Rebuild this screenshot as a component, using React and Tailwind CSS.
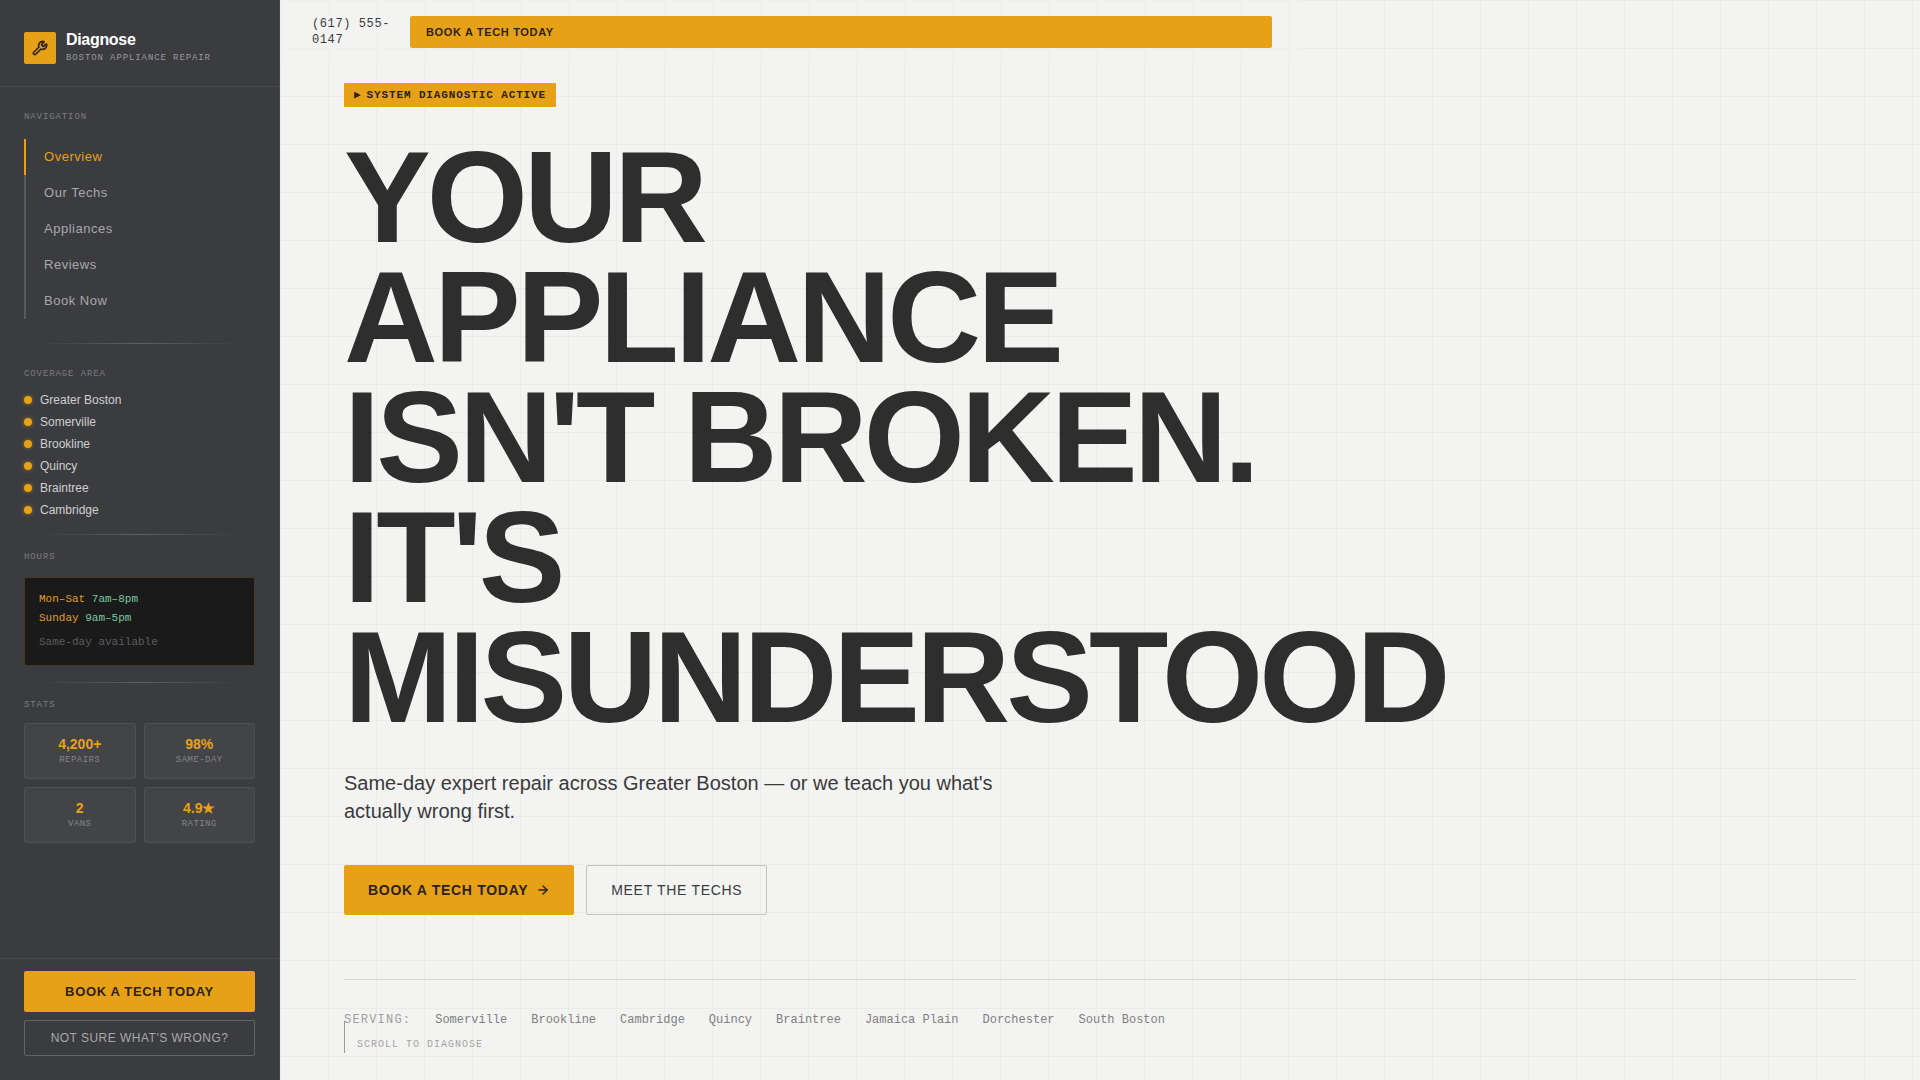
import React from 'react';
import { ArrowRight, Wrench } from 'lucide-react';

const navItems = [
  { label: 'Overview', href: '#overview', active: true },
  { label: 'Our Techs', href: '#techs' },
  { label: 'Appliances', href: '#appliances' },
  { label: 'Reviews', href: '#reviews' },
  { label: 'Book Now', href: '#book' },
];

const coverage = [
  'Greater Boston',
  'Somerville',
  'Brookline',
  'Quincy',
  'Braintree',
  'Cambridge',
];

const stats = [
  { value: '4,200+', label: 'REPAIRS' },
  { value: '98%', label: 'SAME-DAY' },
  { value: '2', label: 'VANS' },
  { value: '4.9★', label: 'RATING' },
];

const serving = [
  'Somerville',
  'Brookline',
  'Cambridge',
  'Quincy',
  'Braintree',
  'Jamaica Plain',
  'Dorchester',
  'South Boston',
];

const headline = ['YOUR', 'APPLIANCE', "ISN'T BROKEN.", "IT'S", 'MISUNDERSTOOD'];

const SectionLabel = ({ children }) => (
  <h2 className="font-['Liberation_Mono',monospace] text-[9px] leading-3 tracking-widest text-[#7c7c80]">
    {children}
  </h2>
);

const Divider = () => (
  <div className="mx-4 h-px bg-linear-to-r from-transparent via-[#606064] to-transparent" />
);

const Sidebar = () => (
  <aside className="sticky top-0 flex h-screen w-70 shrink-0 flex-col border-r border-[#4a4a4d] bg-[#3b3c3f]">
    <div className="flex items-center gap-2.5 border-b border-[#4a4a4d] px-6 pt-[30px] pb-5">
      <div className="flex size-8 items-center justify-center rounded-xs bg-[#e6a117] text-[#2c2218]">
        <Wrench size={16} strokeWidth={2.5} />
      </div>
      <div>
        <p className="text-base leading-5 font-bold tracking-[-0.02em] text-white">Diagnose</p>
        <p className="font-['Liberation_Mono',monospace] text-[9px] leading-4 tracking-widest text-[#99999c]">
          BOSTON APPLIANCE REPAIR
        </p>
      </div>
    </div>

    <div className="flex-1 px-6 pt-6">
      <SectionLabel>NAVIGATION</SectionLabel>
      <nav className="mt-4 flex flex-col">
        {navItems.map((item) => (
          <a
            key={item.label}
            href={item.href}
            className={
              item.active
                ? 'border-l-2 border-[#e6a117] py-2.5 pl-4.5 text-[13px] leading-4 tracking-[0.04em] text-[#e6a117]'
                : 'border-l-2 border-[#59595c] py-2.5 pl-4.5 text-[13px] leading-4 tracking-[0.04em] text-[#a8a8ab]'
            }
          >
            {item.label}
          </a>
        ))}
      </nav>

      <div className="my-6">
        <Divider />
      </div>

      <SectionLabel>COVERAGE AREA</SectionLabel>
      <ul className="mt-3 flex flex-col gap-1.5">
        {coverage.map((place) => (
          <li key={place} className="flex items-center gap-2 text-xs leading-4 text-[#cfcfd1]">
            <span className="size-2 rounded-full bg-[#e6a117] shadow-[0_0_4px_rgba(230,161,23,0.5)]" />
            {place}
          </li>
        ))}
      </ul>

      <div className="my-4">
        <Divider />
      </div>

      <SectionLabel>HOURS</SectionLabel>
      <div className="mt-3.5 rounded-xs border border-[#463a20] bg-[#1a1a1a] px-3.5 pt-3 pb-[13px] font-['Liberation_Mono',monospace] text-[11px] leading-[19px]">
        <p className="text-[#e09c28]">
          Mon–Sat <span className="text-[#7cc8a4]">7am–8pm</span>
        </p>
        <p className="text-[#e09c28]">
          Sunday <span className="text-[#7cc8a4]">9am–5pm</span>
        </p>
        <p className="mt-[5px] text-[#5c5c5e]">Same-day available</p>
      </div>

      <div className="my-4">
        <Divider />
      </div>

      <SectionLabel>STATS</SectionLabel>
      <div className="mt-3 grid grid-cols-2 gap-2">
        {stats.map((stat) => (
          <div
            key={stat.label}
            className="flex flex-col items-center gap-0.5 rounded-xs border border-[#505053] bg-[#434447] py-3"
          >
            <span className="text-sm leading-4 font-bold text-[#e6a117]">{stat.value}</span>
            <span className="font-['Liberation_Mono',monospace] text-[9px] leading-3 tracking-wider text-[#858588]">
              {stat.label}
            </span>
          </div>
        ))}
      </div>
    </div>

    <div className="flex flex-col gap-2 border-t border-[#4a4a4d] px-6 pt-3 pb-6">
      <button
        type="button"
        className="rounded-xs bg-[#e6a117] py-3 text-[13px] leading-[17px] font-bold tracking-wider text-[#2c2218]"
      >
        BOOK A TECH TODAY
      </button>
      <button
        type="button"
        className="rounded-xs border border-[#636366] py-[9px] text-xs leading-4 tracking-[0.04em] text-[#a8a8ab]"
      >
        NOT SURE WHAT'S WRONG?
      </button>
    </div>
  </aside>
);

const TopBar = () => (
  <header className="flex max-w-5xl items-center gap-4 bg-[#f3f3f1]/50 px-8 py-4">
    <a
      href="tel:+16175550147"
      className="w-[82px] font-['Liberation_Mono',monospace] text-xs leading-4 tracking-wider text-[#3a3a3c]"
    >
      (617) 555-0147
    </a>
    <button
      type="button"
      className="flex-1 rounded-xs bg-[#e6a117] px-4 py-2 text-left text-[11px] leading-4 font-bold tracking-[0.06em] text-[#2c2218]"
    >
      BOOK A TECH TODAY
    </button>
  </header>
);

const Hero = () => (
  <section className="px-16 pt-[19px] pb-[52px]">
    <p className="flex w-fit gap-[5px] rounded-[1px] bg-[#e6a117] px-2.5 font-['Liberation_Mono',monospace] text-[11px] leading-6 font-bold tracking-[0.08em] text-[#2c2218]">
      <span>▶</span>
      SYSTEM DIAGNOSTIC ACTIVE
    </p>

    <h1 className="mt-[30px] text-[130px] leading-[120px] font-bold tracking-[-0.03em] text-[#2e2e2e]">
      {headline.map((line) => (
        <span key={line} className="block">
          {line}
        </span>
      ))}
    </h1>

    <p className="mt-8 max-w-[680px] text-xl leading-7 text-[#3a3a3c]">
      Same-day expert repair across Greater Boston — or we teach you what's actually wrong first.
    </p>

    <div className="mt-10 flex gap-3">
      <button
        type="button"
        className="flex items-center gap-2 rounded-xs bg-[#e6a117] px-6 py-4 text-sm leading-[18px] font-bold tracking-wider text-[#2c2218]"
      >
        BOOK A TECH TODAY
        <ArrowRight size={14} strokeWidth={2.5} />
      </button>
      <button
        type="button"
        className="rounded-xs border border-[#c4c4c4] px-6 text-sm leading-[18px] tracking-wider text-[#3a3a3c]"
      >
        MEET THE TECHS
      </button>
    </div>

    <div className="mt-16 flex flex-wrap gap-6 border-t border-[#dadad9] pt-8 font-['Liberation_Mono',monospace] text-xs leading-4 text-[#808082]">
      <span className="tracking-widest text-[#a0a0a0]">SERVING:</span>
      {serving.map((town) => (
        <span key={town}>{town}</span>
      ))}
    </div>
  </section>
);

const App = () => {
  return (
    <div className="flex min-h-screen bg-[#f3f3f1] font-['Liberation_Sans',Arial,sans-serif]">
      <Sidebar />
      <main className="relative flex-1 bg-[linear-gradient(to_right,#ebebe9_1px,transparent_1px),linear-gradient(to_bottom,#ebebe9_1px,transparent_1px)] bg-[size:48px_48px]">
        <TopBar />
        <Hero />

        {/* scroll hint, sits over the bottom of the hero */}
        <div className="absolute bottom-[27px] left-16 flex h-8 items-end border-l border-[#9a9a9a] pl-3 font-['Liberation_Mono',monospace] text-[10px] leading-4 tracking-widest text-[#a4a4a4]">
          SCROLL TO DIAGNOSE
        </div>
      </main>
    </div>
  );
};

export default App;
